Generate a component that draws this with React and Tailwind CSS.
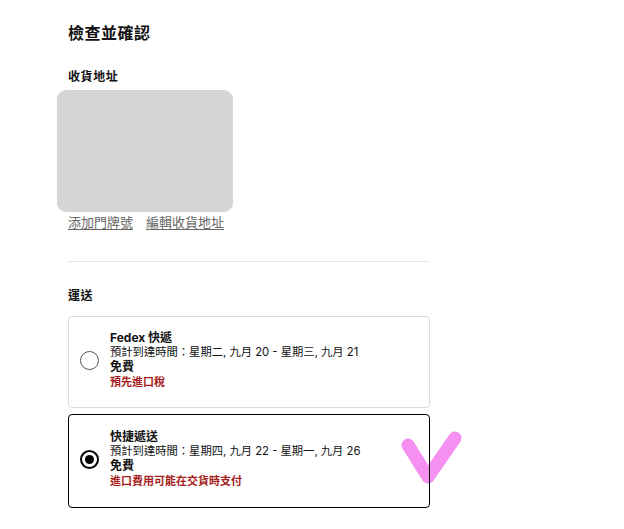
const FONT = { fontFamily: 'Inter, "Noto Sans CJK TC", sans-serif' };

function Radio({ checked }) {
  return checked ? (
    <span className="flex h-[19px] w-[19px] shrink-0 items-center justify-center rounded-full border-2 border-black">
      <span className="h-[9px] w-[9px] rounded-full bg-black" />
    </span>
  ) : (
    <span className="h-[19px] w-[19px] shrink-0 rounded-full border border-[#555]" />
  );
}

function ShippingOption({ checked, title, eta, note, className }) {
  return (
    <div
      className={`relative flex items-center gap-[11px] rounded-[4px] border pl-[11px] pb-[4px] ${
        checked ? "border-black" : "border-[#dcdcdc]"
      } ${className}`}
    >
      <Radio checked={checked} />
      <div className="text-[12px] leading-[14.7px] text-[#111]">
        <p className="font-bold">{title}</p>
        <p className="text-[11.3px]">{eta}</p>
        <p className="font-bold">免費</p>
        <p className="text-[11px] font-bold text-[#a61d1d]">{note}</p>
      </div>
    </div>
  );
}

export default function App() {
  return (
    <div className="relative h-[529px] w-[624px] overflow-hidden bg-white" style={FONT}>
      <div className="pl-[68px] pt-[23px]" style={{ width: 430 }}>
        <h1 className="text-[16px] font-bold leading-[20px] tracking-[0.5px] text-[#111]">檢查並確認</h1>

        <h2 className="mt-[26px] text-[12px] font-bold leading-[16px] tracking-[0.6px] text-[#111]">收貨地址</h2>
        <div className="-ml-[11px] mt-[5px] h-[122px] w-[176px] rounded-[9px] bg-[#d4d5d7]" />

        <div className="mt-[2px] flex gap-[13px] text-[13px] leading-[16px] text-[#666]">
          <a className="underline underline-offset-2">添加門牌號</a>
          <a className="underline underline-offset-2">編輯收貨地址</a>
        </div>

        <div className="mt-[31px] border-t border-[#e6e6e6]" />

        <h2 className="mt-[26px] text-[12px] font-bold leading-[16px] tracking-[0.6px] text-[#111]">運送</h2>

        <ShippingOption
          className="mt-[12px] h-[92px]"
          title="Fedex 快遞"
          eta="預計到達時間：星期二, 九月 20 - 星期三, 九月 21"
          note="預先進口稅"
        />

        <div className="relative mt-[6px]">
          <svg className="absolute left-[330px] top-[16px]" width="70" height="60" viewBox="0 0 70 60">
            <path
              d="M 10 15 L 30 47 L 57 8"
              fill="none"
              stroke="#f58ff0"
              strokeWidth="13"
              strokeLinecap="round"
              strokeLinejoin="round"
            />
          </svg>
          <ShippingOption
            checked
            className="h-[94px]"
            title="快捷遞送"
            eta="預計到達時間：星期四, 九月 22 - 星期一, 九月 26"
            note="進口費用可能在交貨時支付"
          />
        </div>
      </div>
    </div>
  );
}
